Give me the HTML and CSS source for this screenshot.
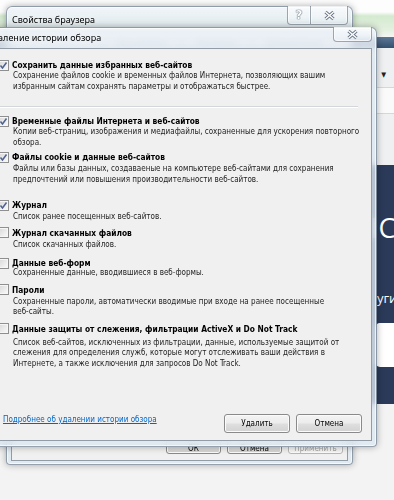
FILE: index.html
```html
<!DOCTYPE html>
<html lang="ru">
<head>
  <meta charset="UTF-8" />
  <meta name="viewport" content="width=device-width, initial-scale=1" />
  <title>Удаление истории обзора</title>
  <link rel="stylesheet" href="styles.css">
</head>
<body>
  <!-- сайт за окнами -->
  <div class="site">
    <div class="site-top"></div>
    <div class="site-bar"></div>
    <div class="site-nav">
      <div class="nav-row"><span class="nav-arrow">▼</span></div>
      <div class="nav-row field"></div>
    </div>
    <div class="site-hero">
      <div class="hero-title">IC</div>
      <div class="hero-sub">уги</div>
      <div class="hero-input"></div>
    </div>
    <div class="site-foot"></div>
  </div>

  <!-- Свойства браузера -->
  <div class="win props">
    <div class="caption">
      <span class="caption-title">Свойства браузера</span>
      <div class="caption-btns">
        <span class="cap-btn help">?</span>
        <span class="cap-btn close">
          <svg width="11" height="9" viewBox="0 0 11 9"><path d="M1.5 1 L9.5 8 M9.5 1 L1.5 8" /><path d="M1.5 1 L9.5 8 M9.5 1 L1.5 8" /></svg>
        </span>
      </div>
    </div>
    <div class="props-body">
      <div class="tabs">
        <span class="tab w1"></span>
        <span class="tab w2">Подключения</span>
        <span class="tab w3">Программы</span>
        <span class="tab w4">Дополнительно</span>
      </div>
      <div class="props-btns">
        <button class="btn small">ОК</button>
        <button class="btn small">Отмена</button>
        <button class="btn small off">Применить</button>
      </div>
    </div>
  </div>

  <!-- Удаление истории обзора -->
  <div class="win dialog">
    <div class="caption">
      <span class="caption-title">Удаление истории обзора</span>
      <span class="cap-btn close wide">
        <svg width="11" height="9" viewBox="0 0 11 9"><path d="M1.5 1 L9.5 8 M9.5 1 L1.5 8" /><path d="M1.5 1 L9.5 8 M9.5 1 L1.5 8" /></svg>
      </span>
    </div>

    <div class="dlg-body">
      <div class="opt">
        <span class="check on"><svg width="9" height="9" viewBox="0 0 9 9"><path d="M1.5 4.5 L3.5 7 L7.5 1.5" /></svg></span>
        <div class="opt-text">
          <div class="opt-title">Сохранить данные избранных веб-сайтов</div>
          <div class="opt-desc">Сохранение файлов cookie и временных файлов Интернета, позволяющих вашим<br>избранным сайтам сохранять параметры и отображаться быстрее.</div>
        </div>
      </div>

      <div class="sep"></div>

      <div class="opt after-sep">
        <span class="check on"><svg width="9" height="9" viewBox="0 0 9 9"><path d="M1.5 4.5 L3.5 7 L7.5 1.5" /></svg></span>
        <div class="opt-text">
          <div class="opt-title">Временные файлы Интернета и веб-сайтов</div>
          <div class="opt-desc">Копии веб-страниц, изображения и медиафайлы, сохраненные для ускорения повторного<br>обзора.</div>
        </div>
      </div>

      <div class="opt close-up">
        <span class="check on"><svg width="9" height="9" viewBox="0 0 9 9"><path d="M1.5 4.5 L3.5 7 L7.5 1.5" /></svg></span>
        <div class="opt-text">
          <div class="opt-title">Файлы cookie и данные веб-сайтов</div>
          <div class="opt-desc">Файлы или базы данных, создаваеные на компьютере веб-сайтами для сохранения<br>предпочтений или повышения производительности веб-сайтов.</div>
        </div>
      </div>

      <div class="opt far">
        <span class="check on"><svg width="9" height="9" viewBox="0 0 9 9"><path d="M1.5 4.5 L3.5 7 L7.5 1.5" /></svg></span>
        <div class="opt-text">
          <div class="opt-title">Журнал</div>
          <div class="opt-desc">Список ранее посещенных веб-сайтов.</div>
        </div>
      </div>

      <div class="opt snug">
        <span class="check"></span>
        <div class="opt-text">
          <div class="opt-title">Журнал скачанных файлов</div>
          <div class="opt-desc">Список скачанных файлов.</div>
        </div>
      </div>

      <div class="opt loose">
        <span class="check"></span>
        <div class="opt-text">
          <div class="opt-title">Данные веб-форм</div>
          <div class="opt-desc">Сохраненные данные, вводившиеся в веб-формы.</div>
        </div>
      </div>

      <div class="opt">
        <span class="check"></span>
        <div class="opt-text">
          <div class="opt-title">Пароли</div>
          <div class="opt-desc">Сохраненные пароли, автоматически вводимые при входе на ранее посещенные<br>веб-сайты.</div>
        </div>
      </div>

      <div class="opt spaced">
        <span class="check"></span>
        <div class="opt-text">
          <div class="opt-title">Данные защиты от слежения, фильтрации ActiveX и Do Not Track</div>
          <div class="opt-desc">Список веб-сайтов, исключенных из фильтрации, данные, используемые защитой от<br>слежения для определения служб, которые могут отслеживать ваши действия в<br>Интернете, а также исключения для запросов Do Not Track.</div>
        </div>
      </div>

      <div class="dlg-foot">
        <a class="more" href="#">Подробнее об удалении истории обзора</a>
        <div class="foot-btns">
          <button class="btn">Удалить</button>
          <button class="btn">Отмена</button>
        </div>
      </div>
    </div>
  </div>
</body>
</html>
```

FILE: styles.css
```css
/* RESET */
* { margin:0; padding:0; box-sizing:border-box }
html, body { width:100%; height:100% }
body {
  position:relative; overflow:hidden;
  font-family:"DejaVu Sans Condensed","DejaVu Sans",sans-serif;
  font-size:8px; color:#000;
  background:#f3f3f3;
}

/* сайт за окнами */
.site { display:flex; flex-direction:column; height:100% }
.site-top {
  height:37px;
  background:linear-gradient(#fdfdfd 0, #fdfdfd 12px, #d4ead0 16px, #e3f0df 30px, #f4f6f4 37px);
}
.site-bar { height:11px; background:linear-gradient(#5d7896,#34506f) }
.site-nav { height:117px; background:#eef0f2; padding-top:20px }
.nav-row { height:20px; border-bottom:1px solid #d4d8dc; text-align:right; padding-right:8px }
.nav-row.field { height:26px; background:#fafafa }
.nav-arrow { font-size:7px; color:#222; line-height:14px }
.site-hero { height:239px; background:#2a3a58; color:#fff; padding-left:370px; padding-top:47px }
.hero-title { font-family:"Open Sans",sans-serif; font-size:27px; line-height:32px; letter-spacing:1px }
.hero-sub { font-family:"Open Sans",sans-serif; font-size:13px; line-height:18px; margin-top:45px; padding-left:7px }
.hero-input { height:44px; margin-top:16px; margin-left:5px; background:#fff; border-radius:5px 0 0 5px }
.site-foot { flex:1; background:#f3f3f3 }

/* окна */
.win {
  position:absolute;
  display:flex; flex-direction:column;
  border:1px solid rgba(60,78,98,.5);
  border-radius:6px 6px 4px 4px;
  background:
    linear-gradient(rgba(255,255,255,.5), rgba(255,255,255,0) 30px),
    rgba(220,230,240,.8);
  backdrop-filter:blur(3px);
  box-shadow:0 0 7px rgba(0,0,0,.32), inset 0 0 0 1px rgba(255,255,255,.65);
}
.props { left:6px; top:6px; width:347px; height:459px; padding:0 4px 3px 4px }
.dialog { left:-18px; top:27px; width:395px; height:420px; padding:0 4px 5px 5px }

.caption { display:flex; align-items:flex-start; flex:none }
.props .caption { height:27px }
.dialog .caption { height:20px }
.caption-title {
  font-family:"Noto Sans",sans-serif; font-size:9px; line-height:14px;
  color:#000; white-space:nowrap;
  text-shadow:0 0 6px rgba(255,255,255,.95);
}
.props .caption-title { margin:6px 0 0 1px }
.dialog .caption-title { margin-top:3px }
.caption-btns { display:flex; margin-left:auto; margin-top:-1px }
.dialog .cap-btn { margin-left:auto; margin-top:-1px }

.cap-btn {
  display:flex; align-items:center; justify-content:center;
  height:19px; width:23px;
  border:1px solid rgba(70,85,100,.5); border-top:none;
  background:linear-gradient(rgba(255,255,255,.6), rgba(232,240,246,.4));
  box-shadow:inset 0 0 0 1px rgba(255,255,255,.6);
}
.cap-btn.help {
  border-radius:0 0 0 4px; border-right:none;
  font-family:"DejaVu Sans",sans-serif; font-weight:bold; font-size:12px;
  color:#fff; text-shadow:0 0 1px #5c6a7a, 0 0 1px #5c6a7a, 0 0 1px #5c6a7a;
}
.cap-btn.close { width:38px; border-radius:0 0 4px 0 }
.cap-btn.close.wide { width:39px; height:15px; border-radius:0 0 4px 4px }
.cap-btn svg { overflow:visible }
.cap-btn svg path { stroke:#6a7786; stroke-width:3.2; fill:none }
.cap-btn svg path + path { stroke:#fff; stroke-width:1.4 }

/* клиентская часть свойств */
.props-body {
  flex:1; display:flex; flex-direction:column;
  background:#f0f0f0;
  border:1px solid rgba(70,88,108,.55);
  padding:0 4px 6px 0;
}
.tabs { display:flex; height:17px; border-bottom:1px solid #b5bcc4; color:#7c8796; font-size:7.5px; line-height:16px }
.tab { text-align:center; border-right:1px solid #c2c8ce; white-space:nowrap; overflow:hidden }
.tab.w1 { width:90px }
.tab.w2 { width:80px }
.tab.w3 { width:71px }
.tab.w4 { width:82px; border-right:none }
.props-btns { margin-top:auto; display:flex; justify-content:flex-end; gap:6px }

/* клиентская часть диалога */
.dlg-body {
  flex:1; display:flex; flex-direction:column;
  background:#f0f0f0;
  border:1px solid rgba(70,88,108,.55);
  padding:10px 9px 7px 9px;
  white-space:nowrap;
}
.opt { display:flex; gap:3px; align-items:flex-start; margin-top:5px }
.opt:first-child { margin-top:0 }
.opt.after-sep { margin-top:7px }
.opt.close-up { margin-top:3px }
.opt.far { margin-top:14px }
.opt.snug { margin-top:4px }
.opt.loose { margin-top:7px }
.opt-title { font-weight:bold; font-size:8.3px; line-height:12px }
.opt-desc { margin:1px 0 0 1px; line-height:10.5px; color:#222 }
.opt:first-child .opt-desc, .after-sep .opt-desc { margin-top:0 }
.loose .opt-desc { margin-top:-1px }
.spaced .opt-desc { margin-top:3px }

.check {
  flex:none; width:11px; height:11px; margin-top:.5px;
  display:flex; align-items:center; justify-content:center;
  border:1px solid #8f8f8f;
  background:linear-gradient(135deg,#d8d8d8,#fbfbfb);
  box-shadow:inset 0 0 0 1px #f6f6f6;
}
.check svg path { stroke:#4e6190; stroke-width:1.5; fill:none }

.sep {
  height:2px; margin:14px 4px 0 0;
  border-top:1px solid #d3d6da; border-bottom:1px solid #fff;
}

.dlg-foot { margin-top:auto; display:flex; align-items:flex-start }
.more { margin:0 0 0 5px; line-height:12px; color:#0066cc; text-decoration:underline }
.foot-btns { margin-left:auto; display:flex; gap:6px }

.btn {
  width:66px; height:19px;
  font-family:inherit; font-size:8px; color:#000;
  border:1px solid #8a8a8a; border-radius:3px;
  background:linear-gradient(#f4f4f4 0%, #ececec 48%, #dfdfdf 52%, #d2d2d2 100%);
  box-shadow:inset 0 0 0 1px #fbfbfb;
}
.btn.small { width:55px; padding-top:8px; line-height:9px }
.btn.off { color:#a0a0a0; border-color:#b8b8b8; background:#f4f4f4 }
```
